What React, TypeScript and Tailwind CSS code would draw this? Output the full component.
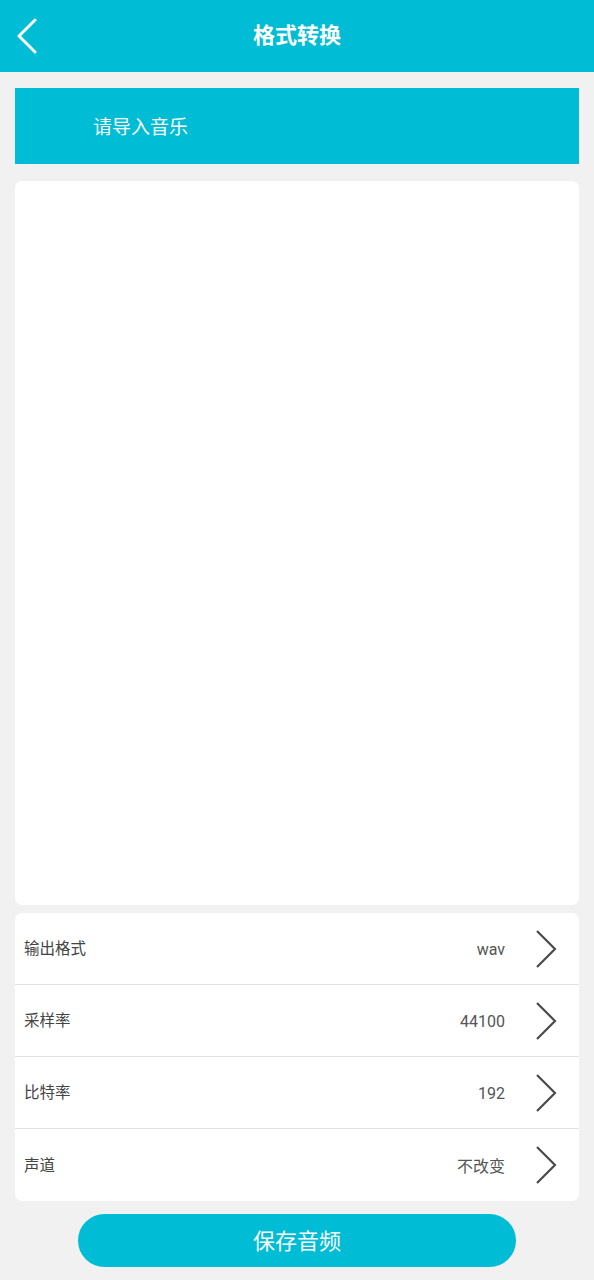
import React from "react";

const font = { fontFamily: 'Roboto, "Noto Sans CJK SC", "Noto Sans", sans-serif' };

function Chevron() {
  return (
    <svg width="22" height="38" viewBox="0 0 22 38" className="shrink-0">
      <polyline points="2,1 20,19 2,37" fill="none" stroke="#4a4a4a" strokeWidth="2.2" strokeLinejoin="miter" />
    </svg>
  );
}

const rows = [
  { label: "输出格式", value: "wav" },
  { label: "采样率", value: "44100" },
  { label: "比特率", value: "192" },
  { label: "声道", value: "不改变" },
];

export default function App() {
  return (
    <div className="w-[594px] h-[1280px] bg-[#f1f1f1] flex flex-col" style={font}>
      <div className="h-[72px] bg-[#00bcd4] flex items-center relative shrink-0">
        <svg width="24" height="36" viewBox="0 0 24 36" className="absolute left-[15px] top-[18px]">
          <polyline points="20,2 4,18 20,34" fill="none" stroke="#ffffff" strokeWidth="3" strokeLinecap="round" strokeLinejoin="round" />
        </svg>
        <div className="flex-1 text-center text-white text-[22px] font-bold leading-none">格式转换</div>
      </div>
      <div className="px-[15px] pt-[16px] flex flex-col">
        <div className="h-[76px] bg-[#00bcd4] flex items-center pl-[78px] pt-[4px] text-white text-[19px]">请导入音乐</div>
        <div className="mt-[17px] h-[724px] bg-white rounded-[7px]" />
        <div className="mt-[8px] bg-white rounded-[7px] flex flex-col">
          {rows.map((r, i) => (
            <div
              key={r.label}
              className={`h-[72px] flex items-center pl-[9px] pr-[22px] ${i < rows.length - 1 ? "border-b border-[#e2e2e2]" : "h-[71px]"}`}
            >
              <div className="flex-1 text-[15.5px] text-[#444444] pt-[3px]">{r.label}</div>
              <div className="text-[16px] text-[#555555] mr-[30px] pt-[3px]">{r.value}</div>
              <Chevron />
            </div>
          ))}
        </div>
      </div>
      <div className="flex justify-center mt-[13px]">
        <div className="w-[438px] h-[53px] rounded-full bg-[#00bcd4] flex items-center justify-center text-white text-[22px] pt-[2px]">保存音频</div>
      </div>
    </div>
  );
}
